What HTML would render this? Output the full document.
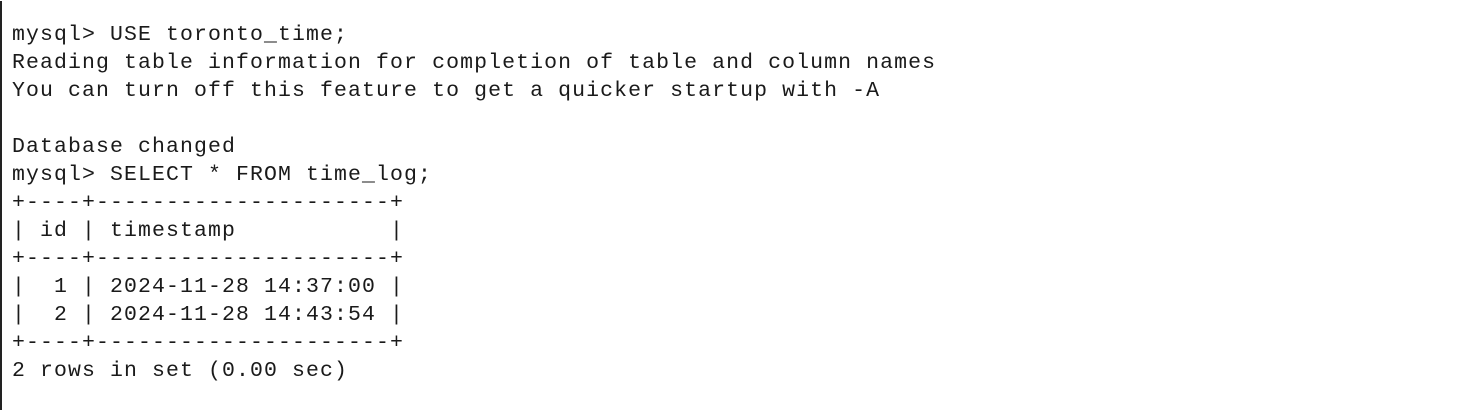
<!DOCTYPE html>
<html><head><meta charset="utf-8"><style>
html,body{margin:0;padding:0;background:#fff;}
body{width:1484px;height:410px;overflow:hidden;position:relative;}
.bl{position:absolute;left:0;top:1px;width:2px;height:409px;background:#222;}
pre{position:absolute;left:12px;top:21px;margin:0;font-family:"Liberation Mono",monospace;font-size:21.5px;letter-spacing:1.1px;line-height:28px;color:#1a1a1a;}
</style></head><body>
<div class="bl"></div>
<pre>mysql&gt; USE toronto_time;
Reading table information for completion of table and column names
You can turn off this feature to get a quicker startup with -A

Database changed
mysql&gt; SELECT * FROM time_log;
+----+---------------------+
| id | timestamp           |
+----+---------------------+
|  1 | 2024-11-28 14:37:00 |
|  2 | 2024-11-28 14:43:54 |
+----+---------------------+
2 rows in set (0.00 sec)</pre>
</body></html>
